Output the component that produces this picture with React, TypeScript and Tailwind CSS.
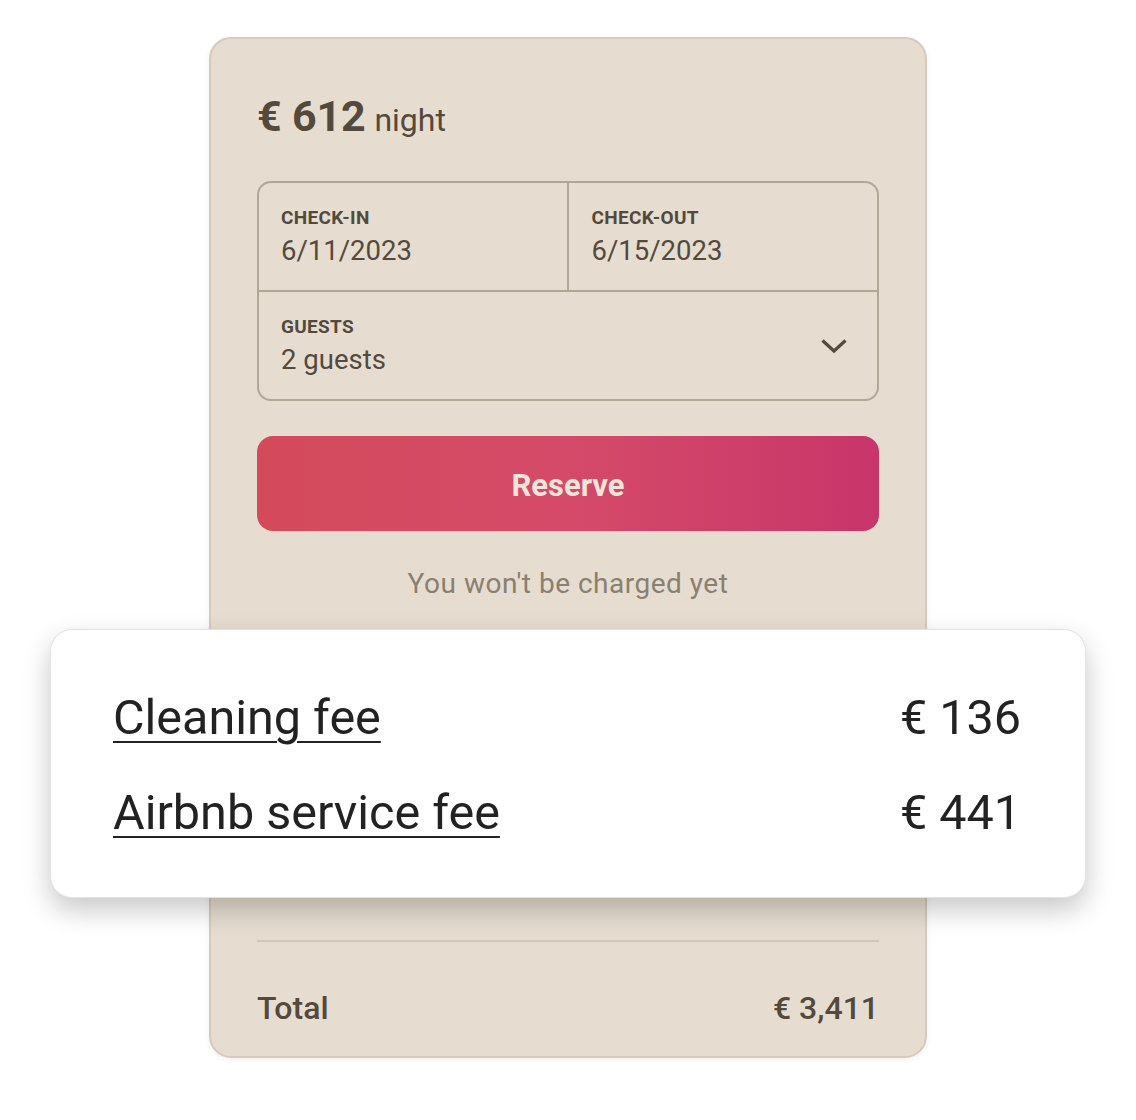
import React from "react";

function Chevron() {
  return (
    <svg width="28" height="16" viewBox="0 0 28 16" fill="none">
      <path d="M2.5 2.5 L14 13 L25.5 2.5" stroke="#54493d" strokeWidth="3.2" strokeLinecap="butt" strokeLinejoin="miter" />
    </svg>
  );
}

export default function App() {
  return (
    <div
      className="relative w-[1136px] h-[1120px] bg-white"
      style={{ fontFamily: "Roboto, 'Noto Sans', sans-serif" }}
    >
      <div className="pt-[37px] flex justify-center">
        <div className="w-[718px] rounded-[22px] border-2 border-[#d4cbbd] bg-[#e6ddd0] shadow-[0_2px_6px_rgba(0,0,0,0.06)] px-[46px] pt-[53px] pb-[30px] text-[#54493d]">
          <div className="flex items-baseline h-[48px] leading-[48px]">
            <span className="text-[43px] font-bold tracking-[-0.2px]">€ 612</span>
            <span className="text-[32px] ml-[9px]">night</span>
          </div>

          <div className="mt-[41px] rounded-[14px] border-2 border-[#b2a797] overflow-hidden">
            <div className="flex border-b-2 border-[#b2a797]">
              <div className="flex-1 border-r-2 border-[#b2a797] pl-[22px] pt-[24px] pb-[22px]">
                <div className="text-[19px] leading-[22px] font-bold tracking-[0.3px]">CHECK-IN</div>
                <div className="text-[27.5px] leading-[34px] mt-[5px]">6/11/2023</div>
              </div>
              <div className="flex-1 pl-[23px] pt-[24px] pb-[22px]">
                <div className="text-[19px] leading-[22px] font-bold tracking-[0.3px]">CHECK-OUT</div>
                <div className="text-[27.5px] leading-[34px] mt-[5px]">6/15/2023</div>
              </div>
            </div>
            <div className="flex items-center justify-between pl-[22px] pr-[29px] pt-[24px] pb-[22px]">
              <div>
                <div className="text-[19px] leading-[22px] font-bold tracking-[0.3px]">GUESTS</div>
                <div className="text-[27.5px] leading-[34px] mt-[5px]">2 guests</div>
              </div>
              <div className="-mt-[2px]">
                <Chevron />
              </div>
            </div>
          </div>

          <button className="mt-[35px] w-full h-[95px] pt-[6px] rounded-[16px] bg-linear-to-r from-[#d44a5b] via-[#d54a69] to-[#c8356a] text-[#efe5d8] text-[31px] font-bold">
            Reserve
          </button>

          <div className="mt-[37px] text-center text-[28px] leading-[32px] tracking-[0.5px] text-[#8a8072]">
            You won't be charged yet
          </div>

          <div className="mt-[340px] h-[2px] bg-[#d2c8ba]" />

          <div className="mt-[48px] flex justify-between items-center text-[32px] leading-[36px] font-medium">
            <span>Total</span>
            <span>€ 3,411</span>
          </div>
        </div>
      </div>

      <div className="absolute left-[50px] top-[629px] w-[1036px] h-[269px] rounded-[22px] bg-white border border-[#e2e2e2] shadow-[0_12px_28px_rgba(0,0,0,0.22)] pl-[62px] pr-[64px] pt-[60px] flex flex-col gap-[39px] text-[#222222] text-[48.5px] leading-[56px]">
        <div className="flex justify-between">
          <span className="underline decoration-2 underline-offset-[7px]">Cleaning fee</span>
          <span>€ 136</span>
        </div>
        <div className="flex justify-between">
          <span className="underline decoration-2 underline-offset-[7px]">Airbnb service fee</span>
          <span>€ 441</span>
        </div>
      </div>
    </div>
  );
}
